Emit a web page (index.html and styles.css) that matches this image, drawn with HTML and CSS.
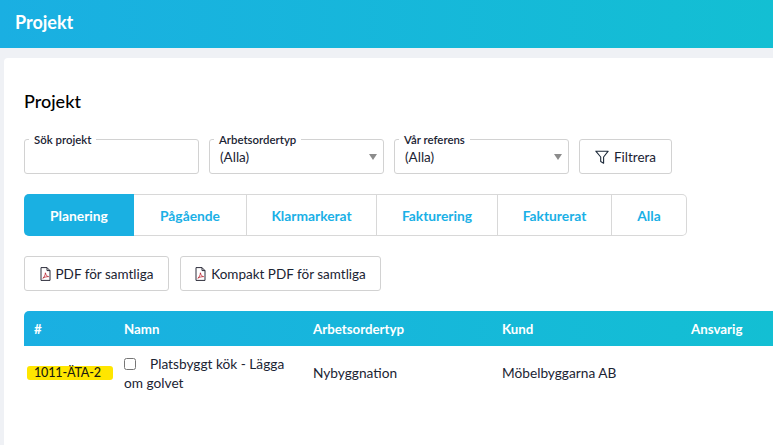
FILE: index.html
```html
<!DOCTYPE html>
<html lang="sv">
<head>
<meta charset="utf-8">
<title>Projekt</title>
<link rel="stylesheet" href="styles.css">
</head>
<body>
<header class="topbar">Projekt</header>
<main class="card">
  <h1 class="title">Projekt</h1>
  <div class="filters">
    <div class="field"><span class="field-label">Sök projekt</span></div>
    <div class="field"><span class="field-label">Arbetsordertyp</span><span class="field-value">(Alla)</span><span class="caret"></span></div>
    <div class="field"><span class="field-label">Vår referens</span><span class="field-value">(Alla)</span><span class="caret"></span></div>
    <button class="btn btn-filter">
      <svg class="icon-filter" viewBox="0 0 14 14" width="14" height="14"><path d="M.8 1.200h12.400L8.600 7v6.200L5.700 11.600V7z" fill="none" stroke="#1d2a3a" stroke-width="1.100" stroke-linejoin="round"/></svg>
      Filtrera
    </button>
  </div>
  <nav class="tabs">
    <a class="tab tab-active w1">Planering</a>
    <a class="tab w2">Pågående</a>
    <a class="tab w3">Klarmarkerat</a>
    <a class="tab w4">Fakturering</a>
    <a class="tab w5">Fakturerat</a>
    <a class="tab w6">Alla</a>
  </nav>
  <div class="actions">
    <button class="btn btn-pdf w-pdf">
      <svg viewBox="0 0 11 14" width="11" height="14"><path d="M1 .6h6l3 3v9.800H1z M7 .6v3h3" fill="none" stroke="#2c2c3a" stroke-width="1"/><path d="M2.800 11.200c1.500-1 2.500-3.200 2.600-5.400.4 2.300 1.600 3.600 3.200 3.800-2 0-3.900.5-5.800 1.600z" fill="none" stroke="#b8202c" stroke-width=".8"/></svg>
      PDF för samtliga
    </button>
    <button class="btn btn-pdf w-kompakt">
      <svg viewBox="0 0 11 14" width="11" height="14"><path d="M1 .6h6l3 3v9.800H1z M7 .6v3h3" fill="none" stroke="#2c2c3a" stroke-width="1"/><path d="M2.800 11.200c1.500-1 2.500-3.200 2.600-5.400.4 2.300 1.600 3.600 3.200 3.800-2 0-3.900.5-5.800 1.600z" fill="none" stroke="#b8202c" stroke-width=".8"/></svg>
      Kompakt PDF för samtliga
    </button>
  </div>
  <table class="grid">
    <colgroup><col class="c-id"><col class="c"><col class="c"><col class="c"><col class="c-last"></colgroup>
    <thead>
      <tr><th>#</th><th>Namn</th><th>Arbetsordertyp</th><th>Kund</th><th>Ansvarig</th></tr>
    </thead>
    <tbody>
      <tr>
        <td class="cell-id"><mark class="hl">1011-ÄTA-2</mark></td>
        <td class="cell-name"><input class="check" type="checkbox">Platsbyggt kök - Lägga om golvet</td>
        <td>Nybyggnation</td>
        <td>Möbelbyggarna AB</td>
        <td></td>
      </tr>
    </tbody>
  </table>
</main>
</body>
</html>
```

FILE: styles.css
```css
* { box-sizing: border-box; }
html, body { height: 100%; }
body {
  margin: 0;
  overflow: hidden;
  background: #eff1f5;
  color: #1b2433;
  font-family: "Lato", "Liberation Sans", sans-serif;
  font-size: 13px;
}
.topbar {
  height: 48px;
  padding: 11px 15px 0;
  background: linear-gradient(90deg, #1aafe2, #13bfd3);
  color: #fff;
  font-size: 18px;
  font-weight: 700;
  line-height: 22px;
}
.card {
  width: 769px;
  min-height: 400px;
  margin: 10px 0 0 4px;
  padding: 32px 0 0 20px;
  background: #fff;
  border-radius: 4px 0 0 0;
}
.title {
  margin: 0;
  height: 23px;
  color: #000;
  font-size: 18px;
  font-weight: 500;
  line-height: 22px;
}
.filters {
  display: flex;
  gap: 10px;
  margin-top: 26px;
}
.field {
  position: relative;
  width: 175px;
  height: 35px;
  padding: 9px 10px 0 10px;
  border: 1px solid #d2d2d2;
  border-radius: 3px;
}
.field-label {
  position: absolute;
  top: -7px;
  left: 4px;
  padding: 0 5px;
  background: #fff;
  font-size: 11.400px;
  line-height: 13px;
  font-weight: 600;
}
.field-value { font-size: 13.500px; line-height: 16px; }
.caret {
  position: absolute;
  top: 14px;
  right: 6px;
  border: 4.500px solid transparent;
  border-top: 6px solid #8c8c8c;
  border-bottom: 0;
}
.btn {
  display: inline-flex;
  align-items: center;
  justify-content: center;
  gap: 5px;
  height: 35px;
  padding: 0;
  border: 1px solid #d2d2d2;
  border-radius: 3px;
  background: #fff;
  color: #1b2433;
  font: inherit;
  font-size: 13.500px;
}
.btn-filter { width: 93px; }
.tabs {
  display: flex;
  width: 663px;
  height: 42px;
  margin-top: 20px;
  border: 1px solid #d8d8d8;
  border-left: 0;
  border-radius: 5px;
}
.tab {
  display: flex;
  align-items: center;
  justify-content: center;
  border-right: 1px solid #d8d8d8;
  color: #1ab0e6;
  font-size: 13.800px;
  font-weight: 700;
}
.tab:last-child { border-right: 0; }
.tab-active {
  margin: -1px 0;
  background: #1ab0e2;
  color: #fff;
  border-right: 0;
  border-radius: 5px 0 0 5px;
}
.w1 { width: 110px; }
.w2 { width: 113px; }
.w3 { width: 130px; }
.w4 { width: 121px; }
.w5 { width: 114px; }
.w6 { width: 74px; }
.actions {
  display: flex;
  gap: 11px;
  margin-top: 20px;
}
.w-pdf { width: 145px; }
.w-kompakt { width: 201px; }
.grid {
  width: 749px;
  margin-top: 20px;
  border-collapse: collapse;
  table-layout: fixed;
}
.c-id { width: 90px; }
.c { width: 189px; }
.c-last { width: 92px; }
.grid thead tr {
  height: 35px;
  background: linear-gradient(90deg, #1aafe2, #13bfd3);
}
.grid th {
  padding: 0 10px;
  color: #fff;
  font-size: 13.300px;
  font-weight: 700;
  text-align: left;
  white-space: nowrap;
}
.grid th:first-child { border-radius: 5px 0 0 0; }
.grid td {
  padding: 17px 10px 0;
  height: 60px;
  vertical-align: top;
  line-height: 19px;
  font-size: 13.700px;
}
.grid td.cell-name { padding-top: 8px; }
.grid td.cell-id { padding: 20px 0 0 3px; }
.hl {
  display: block;
  width: 86px;
  height: 14px;
  padding-left: 7px;
  background: #ffe600;
  border-radius: 3px;
  color: #1a1a10;
  font-size: 12.600px;
  font-weight: 500;
  letter-spacing: -0.2px;
  line-height: 14px;
}
.check {
  width: 12px;
  height: 12px;
  margin: 0 14px 0 0;
  vertical-align: -1px;
}
```
